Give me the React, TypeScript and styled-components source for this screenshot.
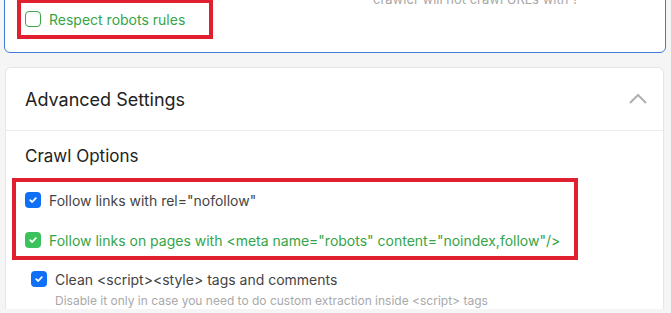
import styled, { createGlobalStyle } from "styled-components";

const GlobalStyle = createGlobalStyle`
  html, body {
    margin: 0;
    padding: 0;
    background: #f5f5f5;
    font-family: Inter, "Noto Sans", sans-serif;
    overflow: hidden;
  }
`;

const Page = styled.div`
  width: 671px;
  height: 313px;
  overflow: hidden;
`;

const FilterCard = styled.div`
  margin: -44px 5px 0 4px;
  background: #fff;
  border: 1px solid #3b7cd6;
  border-radius: 6px;
  display: grid;
  grid-template-columns: 368px 1fr;
  padding-bottom: 13px;
`;

const LeftCol = styled.div`
  padding: 42px 0 0 12px;
`;

const HelpText = styled.p`
  margin: 15px 0 0;
  font-size: 13px;
  line-height: 18px;
  color: #a8a8a8;
`;

const Highlight = styled.div<{ $width: number; $pad: string }>`
  width: ${(p) => p.$width}px;
  box-sizing: border-box;
  border: 4px solid #e0202e;
  padding: ${(p) => p.$pad};
  display: flex;
  flex-direction: column;
  gap: 16px;
`;

const Row = styled.label<{ $green?: boolean }>`
  display: flex;
  align-items: center;
  gap: 8px;
  height: 24px;
  font-size: 14px;
  color: ${(p) => (p.$green ? "#34a547" : "#444")};
  white-space: nowrap;
`;

const Box = styled.span<{ $kind: "blue" | "green" | "empty" }>`
  width: 16px;
  height: 16px;
  flex: none;
  box-sizing: border-box;
  border-radius: 4px;
  display: flex;
  align-items: center;
  justify-content: center;
  background: ${(p) =>
    p.$kind === "blue" ? "#0f6ff5" : p.$kind === "green" ? "#3cc25d" : "#fff"};
  border: ${(p) => (p.$kind === "empty" ? "1px solid #3aa54d" : "none")};
`;

const Card = styled.div`
  margin: 14px 7px 0 5px;
  background: #fff;
  border: 1px solid #e6e6e6;
  border-bottom: none;
  border-radius: 6px 6px 0 0;
`;

const CardHeader = styled.div`
  height: 62px;
  display: flex;
  align-items: center;
  justify-content: space-between;
  padding: 0 15px 0 19px;
  border-bottom: 1px solid #ececec;
`;

const Title = styled.h2`
  margin: 0;
  font-size: 18px;
  font-weight: 400;
  color: #222;
`;

const CardBody = styled.div`
  padding: 13px 0 0 6px;
`;

const SectionTitle = styled.h3`
  margin: 0 0 10px 13px;
  font-size: 17px;
  font-weight: 400;
  line-height: 24px;
  color: #222;
`;

const Option = styled.div`
  margin: 7px 0 0 19px;
`;

const Hint = styled.div`
  margin: 2px 0 0 24px;
  font-size: 12px;
  line-height: 16px;
  color: #a9a9a9;
  white-space: nowrap;
`;

const Check = () => (
  <svg width="10" height="10" viewBox="0 0 10 10">
    <path d="M2.2 5.2 L4.2 7 L7.8 3.2" fill="none" stroke="#fff" strokeWidth="1.8" strokeLinecap="round" strokeLinejoin="round" />
  </svg>
);

const Chevron = () => (
  <svg width="20" height="12" viewBox="0 0 20 12">
    <path d="M2 10 L10 2 L18 10" fill="none" stroke="#b0b0b0" strokeWidth="2" />
  </svg>
);

const App = () => {
  return (
    <Page>
      <GlobalStyle />
      <FilterCard>
        <LeftCol>
          <Highlight $width={196} $pad="4px 4px">
            <Row $green>
              <Box $kind="empty" />
              Respect robots rules
            </Row>
          </Highlight>
        </LeftCol>
        <HelpText>
          Enter the list of query parameters the
          <br />
          crawler will not crawl URLs with ?
        </HelpText>
      </FilterCard>
      <Card>
        <CardHeader>
          <Title>Advanced Settings</Title>
          <Chevron />
        </CardHeader>
        <CardBody>
          <SectionTitle>Crawl Options</SectionTitle>
          <Highlight $width={566} $pad="6px 9px 4px">
            <Row>
              <Box $kind="blue">
                <Check />
              </Box>
              Follow links with rel="nofollow"
            </Row>
            <Row $green>
              <Box $kind="green">
                <Check />
              </Box>
              Follow links on pages with &lt;meta name="robots" content="noindex,follow"/&gt;
            </Row>
          </Highlight>
          <Option>
            <Row>
              <Box $kind="blue">
                <Check />
              </Box>
              Clean &lt;script&gt;&lt;style&gt; tags and comments
            </Row>
            <Hint>Disable it only in case you need to do custom extraction inside &lt;script&gt; tags</Hint>
          </Option>
        </CardBody>
      </Card>
    </Page>
  );
};

export default App;
